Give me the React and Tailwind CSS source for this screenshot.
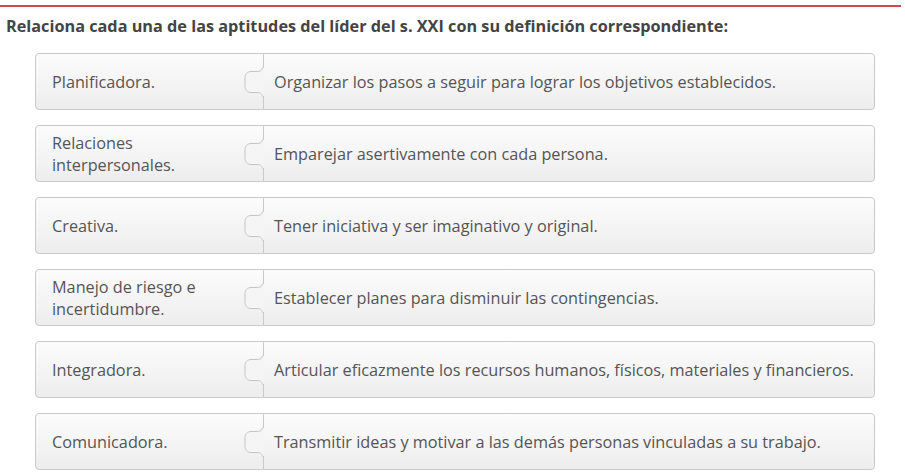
const rows = [
  ['Planificadora.', 'Organizar los pasos a seguir para lograr los objetivos establecidos.'],
  ['Relaciones interpersonales.', 'Emparejar asertivamente con cada persona.'],
  ['Creativa.', 'Tener iniciativa y ser imaginativo y original.'],
  ['Manejo de riesgo e incertidumbre.', 'Establecer planes para disminuir las contingencias.'],
  ['Integradora.', 'Articular eficazmente los recursos humanos, físicos, materiales y financieros.'],
  ['Comunicadora.', 'Transmitir ideas y motivar a las demás personas vinculadas a su trabajo.'],
];

// puzzle joint between the two halves
function Knob() {
  return (
    <svg
      className="absolute top-1/2 -translate-y-1/2 right-[-1px]"
      width="22"
      height="35"
      viewBox="0 0 22 35"
      fill="none"
    >
      <rect x="17" y="3.5" width="5" height="28" fill="#f5f5f5" />
      <path
        d="M20.5 3 C20.5 5.5 18 7 15.5 7 L9 7 C5.5 7 3 9.5 3 13 L3 22 C3 25.5 5.5 28 9 28 L15.5 28 C18 28 20.5 29.5 20.5 32"
        stroke="#c4c4c4"
        strokeWidth="1"
        fill="#f5f5f5"
      />
    </svg>
  );
}

function MatchRow({ term, definition }) {
  return (
    <div className="flex h-[57px]">
      <div className="relative flex items-center w-[229px] pl-[16px] pr-[30px] rounded-l-[4px] border border-[#cacaca] bg-gradient-to-b from-[#fcfcfc] to-[#ededed] text-[16.25px] leading-[22px] text-[#555]">
        <span>{term}</span>
        <Knob />
      </div>
      <div className="flex items-center w-[612px] -ml-px pl-[10px] rounded-r-[4px] border border-[#cacaca] bg-gradient-to-b from-[#fcfcfc] to-[#ededed] text-[16.25px] leading-[22px] text-[#555]">
        {definition}
      </div>
    </div>
  );
}

export default function App() {
  return (
    <div className="w-[905px] h-[476px] bg-white overflow-hidden" style={{ fontFamily: '"Open Sans", sans-serif' }}>
      <div className="pt-[5px] w-[901px]">
        <div className="h-[2px] bg-[#d5464d]" />
      </div>
      <h2 className="pl-[6px] pt-[8px] text-[16.25px] leading-[22px] font-bold text-[#444]">
        Relaciona cada una de las aptitudes del líder del s. XXI con su definición correspondiente:
      </h2>
      <div className="pl-[35px] pt-[16px] flex flex-col gap-[15px]">
        {rows.map(([term, def]) => (
          <MatchRow key={term} term={term} definition={def} />
        ))}
      </div>
    </div>
  );
}
